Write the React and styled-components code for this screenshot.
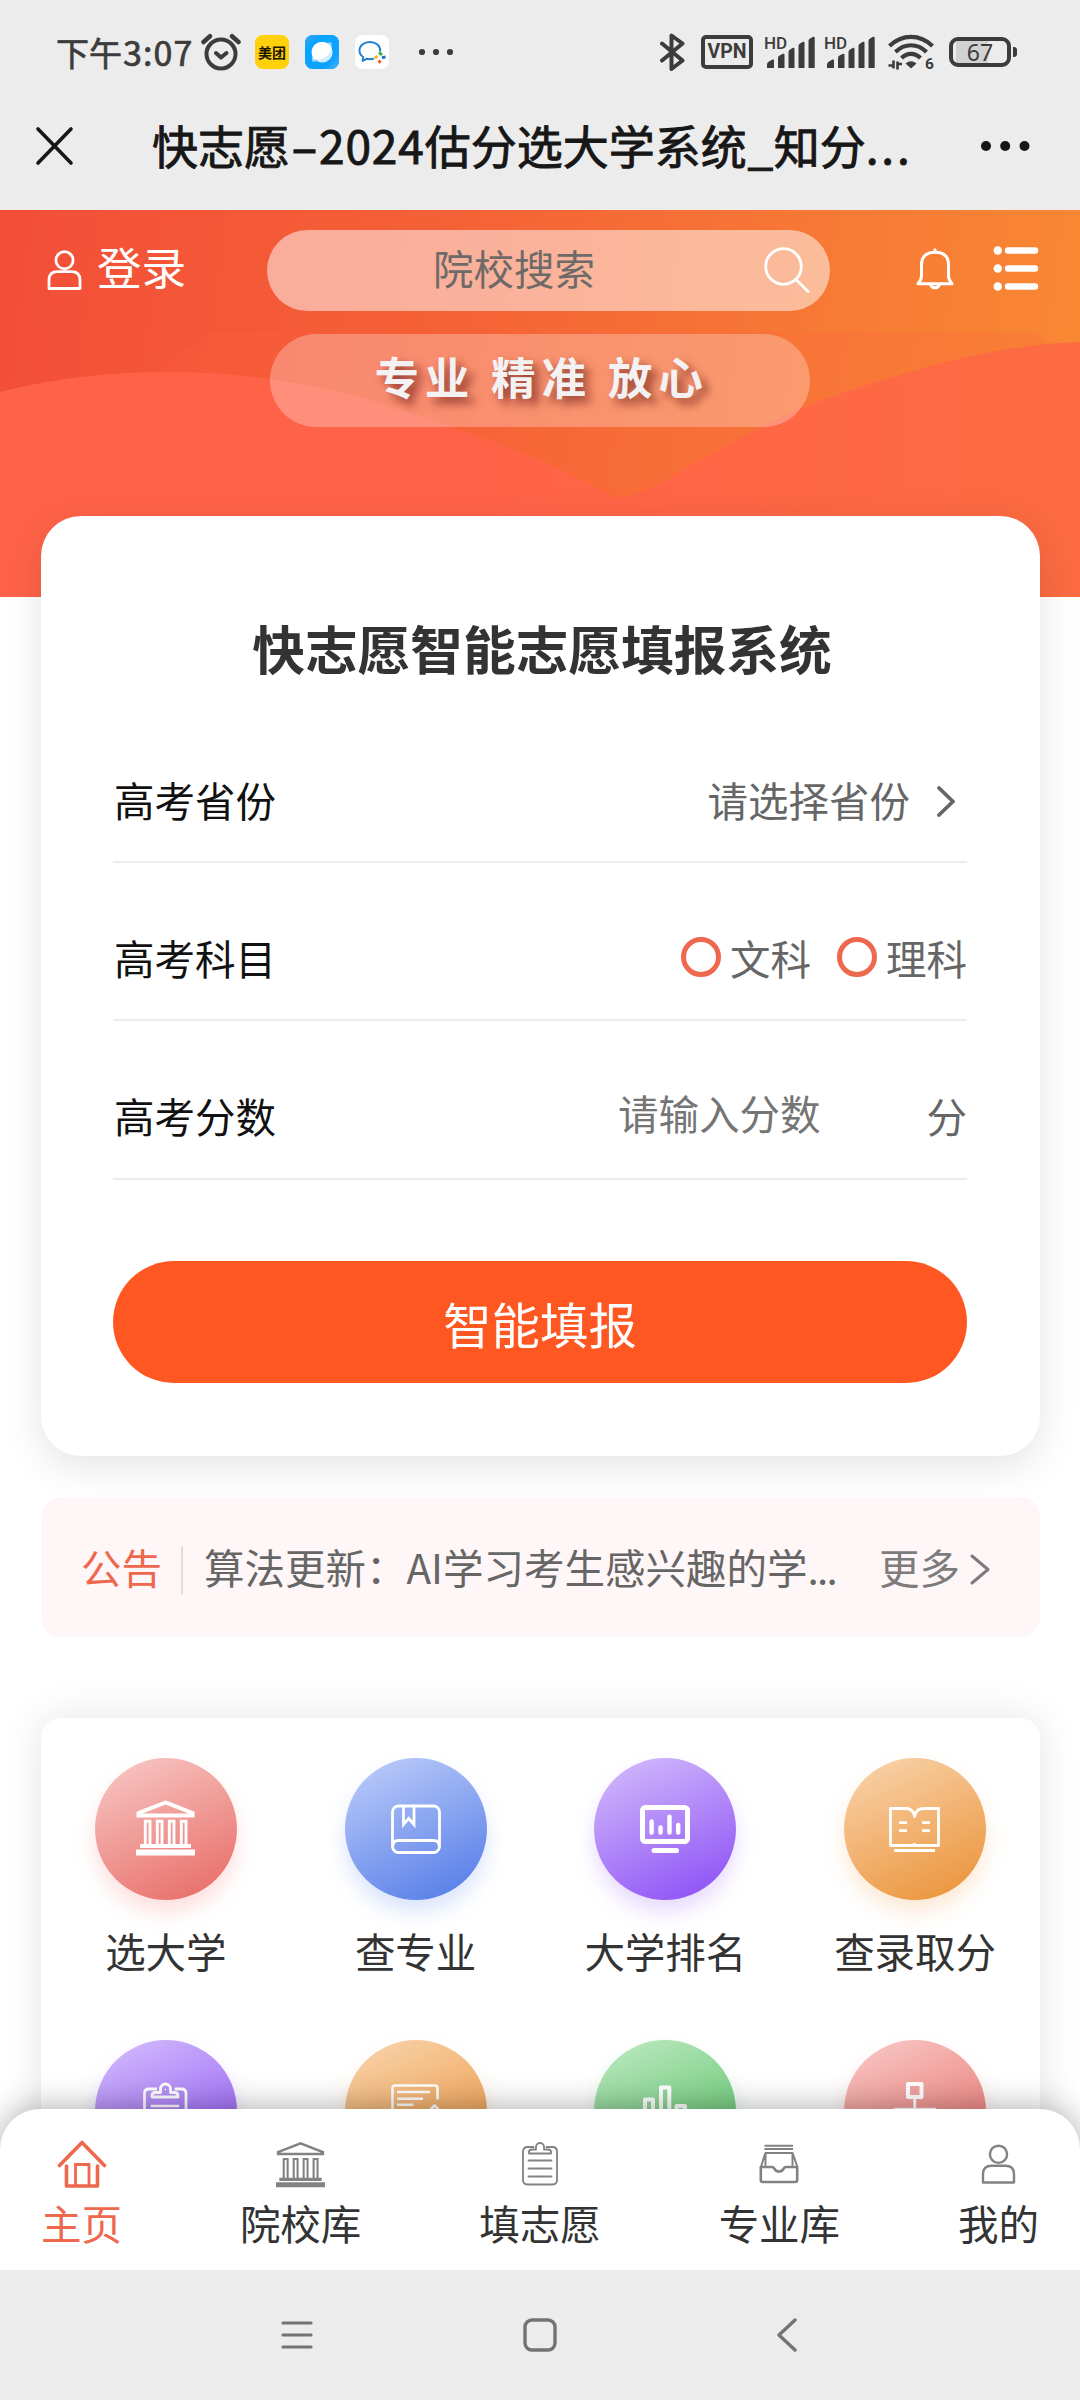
import React from 'react';
import styled, { createGlobalStyle } from 'styled-components';

const GlobalStyle = createGlobalStyle`
  *, *::before, *::after { box-sizing: border-box; }
  body {
    margin: 0;
    background: #ececec;
    font-family: "Noto Sans CJK SC", "Noto Sans", sans-serif;
    -webkit-font-smoothing: antialiased;
  }
  svg { display: block; flex: none; }
`;

const Screen = styled.div`
  width: 1080px;
  height: 2400px;
  display: flex;
  flex-direction: column;
  overflow: hidden;
  background: #ececec;
  color: #333;
  font-size: 40.5px;
  white-space: nowrap;
`;

/* ---------- status bar ---------- */

const StatusBar = styled.header`
  flex: none;
  height: 104px;
  padding: 0 63px 0 56px;
  display: flex;
  align-items: center;
  color: #3c3c3c;
`;

const Clock = styled.div`
  width: 145px;
  font-size: 33px;
  line-height: 40px;
  padding-bottom: 1px;
  -webkit-text-stroke: 0.7px #3c3c3c;
`;

const ClockDigits = styled.span`
  margin-left: 1px;
  font-size: 34px;
  letter-spacing: 1.1px;
`;

const AppBadge = styled.div`
  width: 34px;
  height: 34px;
  margin-left: ${(p) => p.$gap}px;
  border-radius: 8px;
  background: ${(p) => p.$bg};
  display: flex;
  align-items: center;
  justify-content: center;
  overflow: hidden;
  font-size: 14px;
  line-height: 34px;
  font-weight: 700;
  color: #1c1500;
`;

const Overflowed = styled.div`
  margin-left: 29px;
`;

const StatusRight = styled.div`
  margin-left: auto;
  display: flex;
  align-items: center;
`;

const VpnBox = styled.div`
  width: 52px;
  height: 34px;
  margin: 0 12px 0 16px;
  border: 4px solid #3c3c3c;
  border-radius: 5px;
  font: 700 19.5px/26px Roboto, sans-serif;
  text-align: center;
`;

const Signal = styled.div`
  width: 50px;
  height: 34px;
  margin-right: ${(p) => p.$gap}px;
  position: relative;
`;

const HdTag = styled.span`
  position: absolute;
  left: -1px;
  top: 0;
  font: 500 17px/17px Roboto, sans-serif;
`;

const Battery = styled.div`
  width: 62px;
  height: 30px;
  margin-left: 15px;
  border: 4px solid #3c3c3c;
  border-radius: 9px;
  display: flex;
  align-items: center;
  justify-content: center;
  background: linear-gradient(90deg, transparent 3px, #d2d2d2 3px, #d2d2d2 35px, transparent 35px);
  font: 400 23px/22px "Noto Sans", sans-serif;
`;

const BatteryNub = styled.div`
  width: 4px;
  height: 10px;
  margin-left: 2px;
  border-radius: 0 3px 3px 0;
  background: #3c3c3c;
`;

/* ---------- browser title bar ---------- */

const TitleBar = styled.div`
  flex: none;
  height: 106px;
  padding: 0 50px 22px 35px;
  display: flex;
  align-items: center;
  color: #171717;
`;

const PageTitle = styled.h1`
  margin: 0 0 4px 78px;
  width: 770px;
  font-size: 46px;
  line-height: 60px;
  font-weight: 400;
  display: flex;
  -webkit-text-stroke: 0.9px #171717;
`;

const Hyphen = styled.span`
  width: 29px;
  text-align: center;
  display: inline-block;
  transform: scaleX(1.75);
`;

const Underscore = styled.span`
  width: 27px;
  text-align: center;
`;

const Digits = styled.span`
  letter-spacing: 0.9px;
`;

const Ellipsis = styled.span`
  letter-spacing: 2.8px;
`;

const TitleMore = styled.div`
  margin-left: auto;
`;

/* ---------- page ---------- */

const Page = styled.main`
  flex: none;
  height: 2060px;
  position: relative;
  overflow: hidden;
  background: #fff;
`;

const Hero = styled.section`
  height: 387px;
  padding-top: 20px;
  position: relative;
  background: linear-gradient(97deg, #f34e38 0%, #f56236 42%, #f77a35 75%, #f98933 100%);
`;

const HeroWaves = styled.svg`
  position: absolute;
  left: 0;
  top: 0;
`;

const TopBar = styled.div`
  position: relative;
  height: 81px;
  padding: 0 41px 0 47px;
  display: flex;
  align-items: center;
`;

const Login = styled.div`
  width: 220px;
  padding-bottom: 2px;
  display: flex;
  align-items: center;
  gap: 15px;
  color: #fff;
  font-size: 44.6px;
  line-height: 60px;
`;

const LoginText = styled.span`
  margin-top: -8px;
`;

const SearchBox = styled.div`
  width: 563px;
  height: 81px;
  padding: 0 20px 0 166px;
  border-radius: 41px;
  background: rgba(255, 255, 255, 0.5);
  display: flex;
  align-items: center;
  justify-content: space-between;
  color: #6e6a68;
`;

const SearchHint = styled.span`
  margin-top: -6px;
`;

const SearchGlyph = styled.span`
  margin-top: -2px;
  color: #fff;
`;

const TopActions = styled.div`
  margin-left: auto;
  padding-bottom: 3px;
  display: flex;
  align-items: center;
  gap: 39px;
  color: #fff;
`;

const Slogan = styled.div`
  position: relative;
  width: 540px;
  height: 93px;
  margin: 23px auto 0;
  padding-left: 3px;
  border-radius: 47px;
  background: rgba(255, 255, 255, 0.28);
  color: #f3f1f1;
  font-size: 44.6px;
  line-height: 83px;
  font-weight: 700;
  letter-spacing: 5.8px;
  text-align: center;
  text-shadow: 6px 6px 10px rgba(80, 5, 5, 0.62);
`;

const Card = styled.section`
  width: 999px;
  margin: ${(p) => p.$top}px 0 0 41px;
  background: #fff;
  border-radius: ${(p) => p.$radius}px;
  box-shadow: 0 ${(p) => p.$drop}px 40px rgba(0, 0, 0, 0.11);
`;

const FormCard = styled(Card)`
  position: relative;
  height: 940px;
  padding: 72px 73px 0 72px;
`;

const FormTitle = styled.h2`
  margin: 0 -4px 0 0;
  height: 116px;
  font-size: 52.7px;
  line-height: 118px;
  font-weight: 700;
  text-align: center;
`;

const FormRow = styled.div`
  height: 158.500px;
  padding-top: ${(p) => p.$top || 33}px;
  border-bottom: 2px solid #ececec;
  display: flex;
  align-items: center;
  color: #666;
`;

const FieldLabel = styled.label`
  flex: 1;
  padding-left: 1px;
  color: #111;
`;

const PickerValue = styled.span`
  margin-right: 27px;
`;

const PickerArrow = styled.span`
  margin: 4px 12px 0 0;
`;

const RadioOption = styled.span`
  display: flex;
  align-items: center;
  margin-left: ${(p) => p.$gap || 0}px;
`;

const RadioDot = styled.span`
  width: 40px;
  height: 40px;
  margin-right: 9px;
  border: 5px solid #ee684e;
  border-radius: 50%;
`;

const ScoreHint = styled.span`
  margin: 0 106px 7px 0;
  color: #757575;
`;

const SubmitButton = styled.button`
  display: block;
  width: 100%;
  height: 122px;
  margin-top: 81px;
  padding: 2px 0 0;
  border: 0;
  border-radius: 61px;
  background: #ff5722;
  color: #fff;
  font-family: inherit;
  font-size: 48.4px;
`;

const Notice = styled.section`
  width: 999px;
  height: 140px;
  margin: 41px 0 0 41px;
  padding: 0 50px 1px 40px;
  border-radius: 20px;
  background: #fff6f7;
  position: relative;
  display: flex;
  align-items: center;
  color: #666;
`;

const NoticeTag = styled.span`
  color: #ee684e;
`;

const NoticeDivider = styled.span`
  width: 2px;
  height: 48px;
  margin: 6px 21px 0 19px;
  background: #e3dcdc;
`;

const NoticeText = styled.span`
  flex: 1;
`;

const NoticeEllipsis = styled.span`
  letter-spacing: -1.8px;
`;

const NoticeMore = styled.span`
  display: flex;
  align-items: center;
  gap: 10px;
  color: #7c7c7c;
`;

const NoticeArrow = styled.span`
  margin-top: 5px;
`;

const MenuCard = styled(Card)`
  height: 600px;
  padding-top: 40px;
  display: grid;
  grid-template-columns: repeat(4, 1fr);
  grid-auto-rows: 221px;
  row-gap: 61px;
`;

const MenuItem = styled.div`
  display: flex;
  flex-direction: column;
  align-items: center;
  gap: 20.500px;
  line-height: 60px;
`;

const MenuDisc = styled.div`
  width: 142px;
  height: 142px;
  border-radius: 50%;
  background: linear-gradient(155deg, ${(p) => p.$from} 8%, ${(p) => p.$to} 95%);
  box-shadow: 0 12px 20px ${(p) => p.$glow};
`;

const TabBar = styled.nav`
  position: absolute;
  left: 0;
  right: 0;
  bottom: 0;
  height: 161px;
  padding: 31px 41px 0;
  border-radius: 40px 40px 0 0;
  background: #fff;
  box-shadow: 0 0 34px rgba(0, 0, 0, 0.34);
  display: flex;
  justify-content: space-between;
`;

const Tab = styled.div`
  display: flex;
  flex-direction: column;
  align-items: center;
  color: ${(p) => (p.$active ? '#ee684e' : '#333')};
  line-height: 50px;
`;

const TabIcon = styled.div`
  height: 48px;
  margin-bottom: 10px;
  display: flex;
  align-items: center;
  color: ${(p) => (p.$active ? '#ee684e' : '#828282')};
`;

/* ---------- system navigation ---------- */

const SystemNav = styled.footer`
  flex: 1;
  background: #ececec;
  display: flex;
  align-items: center;
  padding: 0 283px 0 281px;
  color: #737373;
`;

const NavHome = styled.span`
  margin-left: 210px;
  margin-right: auto;
`;

/* ---------- icons ---------- */

const Svg = ({ w, h, box, sw = 3, children }) => (
  <svg
    width={w}
    height={h}
    viewBox={box || `0 0 ${w} ${h}`}
    fill="none"
    stroke="currentColor"
    strokeWidth={sw}
    strokeLinecap="round"
    strokeLinejoin="round"
  >
    {children}
  </svg>
);

const AlarmIcon = () => (
  <Svg w={40} h={38} sw={4}>
    <circle cx="20" cy="21" r="14.5" />
    <path d="M2.500 9L9 3.200M37.500 9L31 3.200" strokeWidth="4.500" />
    <path d="M15 20l5 4.500 5.500-4.500" />
  </Svg>
);

const StatusDots = () => (
  <Svg w={36} h={10} sw={0}>
    <g fill="currentColor">
      <circle cx="4" cy="5" r="3.100" />
      <circle cx="18" cy="5" r="3.100" />
      <circle cx="32" cy="5" r="3.100" />
    </g>
  </Svg>
);

const BrowserMark = () => (
  <svg width="34" height="34" viewBox="0 0 34 34">
    <defs>
      <linearGradient id="bm" x1="0" y1="0" x2="1" y2="1">
        <stop offset="0" stopColor="#3ea2f2" />
        <stop offset="0.25" stopColor="#08a5ff" />
        <stop offset="0.75" stopColor="#0ba2ff" />
        <stop offset="1" stopColor="#4db4f8" />
      </linearGradient>
    </defs>
    <rect width="34" height="34" fill="url(#bm)" />
    <circle cx="17.300" cy="17.300" r="10.300" fill="#d5edff" />
    <path d="M22 7.500h4.500v5zM7 22v4.500h5z" fill="#9bd8ff" />
    <path d="M26.800 13.500C25 20 17 26 9 24.500 5 19 6 11 12.500 8c6-2.500 12.500.500 14.300 5.500z" fill="#fff" />
  </svg>
);

const WorkChatMark = () => (
  <svg width="34" height="34" viewBox="0 0 34 34" fill="none">
    <path
      d="M25.300 16.500C25.600 10.500 20.800 7 14.800 7 8.800 7 4.500 10.800 4.500 15.500c0 2.800 1.400 5 3.700 6.500l-.6 3.800 4-2c2.500.6 4.900.6 7.300 0"
      stroke="#1f80d0"
      strokeWidth="2"
      strokeLinejoin="round"
    />
    <path d="M24 17.300l3 2.700" stroke="#3cb034" strokeWidth="3" />
    <path d="M27 22.700l3.500-.8" stroke="#1f6fd0" strokeWidth="3" />
    <path d="M23.700 25.300l1.800 2.500" stroke="#ee5a2b" strokeWidth="3" />
    <path d="M19.800 23.300l2.500-2.300" stroke="#f6b62c" strokeWidth="3" />
  </svg>
);

const BluetoothIcon = () => (
  <Svg w={25} h={38} sw={4}>
    <path d="M2 10.500l20.500 17L11.500 36V2.500l11 8L2 27.500" />
  </Svg>
);

const SignalBars = () => (
  <svg width="50" height="34" viewBox="0 0 50 34" fill="currentColor">
    <path d="M2 33v-3.500q0-2 2-3l3.500-2q1.500-.5 1.500 1V33zM13 33V23q0-2 2-2.800l3-1.400q1.500-.3 1.500 1V33zM23.500 33V17q0-2 2-2.800l2.500-1.400q1.500-.3 1.500 1V33zM33.500 33V11q0-2 2-2.800l2.500-1.400q1.500-.3 1.500 1V33zM43.500 33V6q0-2 2-2.800l2.500-1.400q1.700-.5 1.700 1V33z" />
  </svg>
);

const WifiIcon = () => (
  <svg width="46" height="44" viewBox="0 -4 46 44" fill="none" stroke="currentColor" strokeWidth="4.200">
    <path d="M1.500 12C14-.2 32-.2 44.500 12" />
    <path d="M7.500 18c9-9 22-9 31 0" />
    <path d="M13.500 24c5.500-5.500 13.500-5.500 19 0" />
    <path d="M17.500 29.500q5.500-4.500 11 0L23 34.500z" fill="currentColor" stroke="none" />
    <path d="M5.500 26.500v8M.5 31.500h5M9.500 35.500v-8M14 30H9.500" strokeWidth="2.600" />
    <text x="37" y="34.500" fontFamily="Roboto, sans-serif" fontWeight="700" fontSize="15.500" fill="currentColor" stroke="none">6</text>
  </svg>
);

const CloseIcon = () => (
  <Svg w={39} h={40} sw={3.6}>
    <path d="M3 3l33 34M36 3L3 37" />
  </Svg>
);

const MoreIcon = () => (
  <Svg w={50} h={12} sw={0}>
    <g fill="currentColor">
      <circle cx="6" cy="6" r="5" />
      <circle cx="25.200" cy="6" r="5" />
      <circle cx="44.500" cy="6" r="5" />
    </g>
  </Svg>
);

const UserIcon = ({ sw = 2.8 }) => (
  <Svg w={35} h={40} sw={sw}>
    <circle cx="17.500" cy="10.300" r="8.600" />
    <path d="M2 38.500V30c0-6 3-8.300 8.500-8.300h14c5.500 0 8.500 2.300 8.500 8.300v8.500z" />
  </Svg>
);

const SearchIcon = () => (
  <Svg w={46} h={46} sw={2.8}>
    <circle cx="19.500" cy="19.500" r="17.800" />
    <path d="M32 32.500l12 12" strokeLinecap="square" />
  </Svg>
);

const BellIcon = () => (
  <Svg w={38} h={42} sw={3}>
    <path d="M5.500 28V17c0-8.500 5-12.800 13.500-12.800S32.500 8.500 32.500 17v11c0 3 1 5 3.500 7.800H2c2.500-2.800 3.500-4.800 3.500-7.800z" />
    <path d="M19 1.800v2M15 37.500c1.500 3 6.500 3 8 0" />
  </Svg>
);

const ListIcon = () => (
  <Svg w={46} h={46} sw={6.4}>
    <path d="M15 4.500h27M15 22.500h27M15 40.500h27" />
    <g fill="currentColor" stroke="none">
      <circle cx="4.800" cy="4.500" r="4.200" />
      <circle cx="4.800" cy="22.500" r="4.200" />
      <circle cx="4.800" cy="40.500" r="4.200" />
    </g>
  </Svg>
);

const Chevron = ({ w, h, sw, flip }) => (
  <Svg w={w} h={h} sw={sw}>
    <path d={flip ? `M${w - 2} 2L2 ${h / 2}L${w - 2} ${h - 2}` : `M2 2L${w - 2} ${h / 2}L2 ${h - 2}`} />
  </Svg>
);

const BankShape = ({ thin }) => (
  <g strokeLinejoin="miter">
    <path d="M70.500 44.500L43.500 55v2.500h54V55z" strokeWidth={thin ? 3 : 4} />
    <path
      d="M50.300 86V63.300h4.700V86M62.300 86V63.300h4.700V86M74.300 86V63.300H79V86M86.300 86V63.300H91V86"
      strokeWidth={thin ? 2.5 : 2.9}
    />
    <path d="M45 86h51v4H45zM41 91.500h59v6H41z" fill="currentColor" stroke="none" />
  </g>
);

const Disc = ({ children }) => (
  <svg
    width="142"
    height="142"
    viewBox="0 0 142 142"
    fill="none"
    stroke="currentColor"
    strokeWidth="2.800"
    strokeLinejoin="round"
    color="#fff"
  >
    {children}
  </svg>
);

const BookShape = () => (
  <g>
    <rect x="47.500" y="48" width="47" height="46.500" rx="6" />
    <path d="M58.500 48v18.500l5.200-6 5.300 6V48" strokeLinejoin="miter" />
    <path d="M48 88c0-4 2-5.500 5-5.500h36c3 0 5 1.500 5 5.500" />
  </g>
);

const MonitorShape = () => (
  <g strokeLinecap="round">
    <rect x="48.500" y="49.500" width="45" height="34" rx="3" strokeWidth="5" />
    <path d="M57.600 63.500v11M66.500 69.500v5M75.500 58.800v15.700M84.200 67v7.500" strokeWidth="4.400" />
    <path d="M60 92.600h22.500" strokeWidth="5" />
  </g>
);

const OpenBookShape = () => (
  <g>
    <path d="M70.600 58.500c-1-5.500-4-8-8.600-8H46.500v37h48v-37H79.500c-5 0-8 2.500-8.900 8z" />
    <path d="M55 64.700h8M55 72.700h8M78 64.700h8M78 72.700h8M50 92.500h41M70.600 85v3" />
  </g>
);

const ClipboardShape = () => (
  <g>
    <path d="M62 49h-8c-3 0-4.500 1.500-4.500 4.500v40h41.500v-40c0-3-1.500-4.500-4.500-4.500h-7" />
    <path d="M57 57v-1.500c0-2 1.500-3 4-3h4.500V49a5 5 0 0 1 10 0v3.500H79c2.500 0 4 1 4 3V57z" />
    <path d="M55.700 66h28.500M55.700 75h28.500" strokeWidth="2.400" />
    <circle cx="70.300" cy="49.500" r="0.800" fill="currentColor" stroke="none" />
  </g>
);

const NoteShape = () => (
  <g strokeWidth="2.600">
    <path d="M92.500 59.500V48c0-1.700-.8-2.500-2.500-2.500H50c-1.700 0-2.500.8-2.500 2.500v44h30" />
    <path d="M52 52h33M52 58.700h26M52 64.700h16.500M84 71l5.500-5.500L95 71 80 88" />
  </g>
);

const BarsShape = () => (
  <g strokeWidth="4">
    <path d="M51 96V59.500h8V96M67 96V47.500h8.300V96M82.500 96V66H91v30" />
  </g>
);

const OrgShape = () => (
  <g strokeWidth="4">
    <rect x="64" y="44" width="13.500" height="13" />
    <path d="M70.700 57v20M51 80V69.300h40V80" strokeWidth="3" />
  </g>
);

const HomeIcon = () => (
  <Svg w={50} h={48} sw={3.6}>
    <path d="M2.500 25.500L25 2.500l22.500 23" />
    <path d="M9.500 26v20h31V26" />
    <path d="M18.500 45V24.500h13.500V45" strokeWidth="2.800" strokeLinejoin="miter" />
  </Svg>
);

const TabClipboardIcon = () => (
  <Svg w={36} h={44} sw={1.8}>
    <path d="M11.500 5H5.500C2.500 5 1 6.500 1 9.500V38c0 3 1.500 4.500 4.500 4.500h25c3 0 4.500-1.500 4.500-4.500V9.500C35 6.500 33.500 5 30.500 5h-6" />
    <path d="M7 11.500V10c0-1.700 1-2.500 3-2.500h4V5a4 4 0 0 1 8 0v2.500h4c2 0 3 .8 3 2.500v1.500z" />
    <path d="M6.500 18.500h23M6.500 26.500h23M6.500 34.500h23" />
  </Svg>
);

const InboxIcon = () => (
  <Svg w={40} h={40} sw={2.6}>
    <path d="M1.800 23v13q0 2 2 2h32.400q2 0 2-2V23H26.500c-2 0-1.500 4.500-6.500 4.500s-4.500-4.500-6.500-4.500z" />
    <path d="M5.500 1.800h28.500M5.500 5h28.500" strokeWidth="2" strokeLinecap="butt" />
    <path d="M6.500 21V9h27v12M6 10L2 23M34 10l4 12" strokeWidth="2" />
  </Svg>
);

const MenuLines = () => (
  <Svg w={32} h={28} sw={3.2}>
    <path d="M2 2h28M2 14h28M2 26h28" />
  </Svg>
);

const HomeSquare = () => (
  <Svg w={34} h={34} sw={3.4}>
    <rect x="2" y="2" width="30" height="30" rx="7" />
  </Svg>
);

/* ---------- data ---------- */

const red = ['#f7c3c0', '#e86c67', 'rgba(245, 120, 115, 0.24)'];
const purple = ['#cfb6fb', '#8d50f5', 'rgba(150, 90, 250, 0.22)'];
const orange = ['#f8d0a6', '#eb9339', 'rgba(240, 155, 70, 0.22)'];
const blue = ['#b8c8f8', '#557de8', 'rgba(90, 130, 240, 0.22)'];
const green = ['#b6e7bc', '#55bf61', 'rgba(90, 200, 110, 0.22)'];

const menu = [
  { label: '选大学', colors: red, shape: <BankShape /> },
  { label: '查专业', colors: blue, shape: <BookShape /> },
  { label: '大学排名', colors: purple, shape: <MonitorShape /> },
  { label: '查录取分', colors: orange, shape: <OpenBookShape /> },
  { colors: purple, shape: <ClipboardShape /> },
  { colors: orange, shape: <NoteShape /> },
  { colors: green, shape: <BarsShape /> },
  { colors: red, shape: <OrgShape /> },
];

const tabs = [
  { label: '主页', icon: <HomeIcon />, active: true },
  { label: '院校库', icon: <Svg w={49} h={47} box="41 42 59 56"><BankShape thin /></Svg> },
  { label: '填志愿', icon: <TabClipboardIcon /> },
  { label: '专业库', icon: <InboxIcon /> },
  { label: '我的', icon: <UserIcon sw={2.4} /> },
];

export default function App() {
  return (
    <>
      <GlobalStyle />
      <Screen>
        <StatusBar>
          <Clock>下午<ClockDigits>3:07</ClockDigits></Clock>
          <AlarmIcon />
          <AppBadge $gap={14} $bg="#ffd10a">美团</AppBadge>
          <AppBadge $gap={16} $bg="#0aa3ff"><BrowserMark /></AppBadge>
          <AppBadge $gap={16} $bg="#fff"><WorkChatMark /></AppBadge>
          <Overflowed><StatusDots /></Overflowed>
          <StatusRight>
            <BluetoothIcon />
            <VpnBox>VPN</VpnBox>
            <Signal $gap={10}><HdTag>HD</HdTag><SignalBars /></Signal>
            <Signal $gap={13}><HdTag>HD</HdTag><SignalBars /></Signal>
            <WifiIcon />
            <Battery>67</Battery>
            <BatteryNub />
          </StatusRight>
        </StatusBar>

        <TitleBar>
          <CloseIcon />
          <PageTitle>
            快志愿<Hyphen>-</Hyphen><Digits>2024</Digits>估分选大学系统<Underscore>_</Underscore>知分<Ellipsis>...</Ellipsis>
          </PageTitle>
          <TitleMore><MoreIcon /></TitleMore>
        </TitleBar>

        <Page>
          <Hero>
            <HeroWaves width="1080" height="387" viewBox="0 0 1080 387">
              <defs>
                <linearGradient id="hill" x1="0" x2="1">
                  <stop offset="0" stopColor="#ff6347" />
                  <stop offset="0.45" stopColor="#ff6347" />
                  <stop offset="1" stopColor="#fc6b41" />
                </linearGradient>
              </defs>
              <path d="M155 164L198 130Q208 122 220 122H1028Q1036 122 1042 127L1060 140V387H155z" fill="#ff6340" opacity="0.2" />
              <path
                d="M0 182C55 168 110 162 165 162C215 162 255 166 296 173C330 179 365 188 396 198C450 215 500 234 540 250C568 262 595 276 616 287Q624 289 632 286C650 278 664 271 678 263L760 217C800 197 845 181 884 170C940 152 1010 134 1080 132V387H0z"
                fill="url(#hill)"
              />
            </HeroWaves>
            <TopBar>
              <Login><UserIcon /><LoginText>登录</LoginText></Login>
              <SearchBox>
                <SearchHint>院校搜索</SearchHint>
                <SearchGlyph><SearchIcon /></SearchGlyph>
              </SearchBox>
              <TopActions>
                <BellIcon />
                <ListIcon />
              </TopActions>
            </TopBar>
            <Slogan>专业 精准 放心</Slogan>
          </Hero>

          <FormCard $top={-81} $radius={40} $drop={10}>
            <FormTitle>快志愿智能志愿填报系统</FormTitle>
            <FormRow $top={35}>
              <FieldLabel>高考省份</FieldLabel>
              <PickerValue>请选择省份</PickerValue>
              <PickerArrow><Chevron w={18} h={31} sw={3.8} /></PickerArrow>
            </FormRow>
            <FormRow>
              <FieldLabel>高考科目</FieldLabel>
              <RadioOption><RadioDot />文科</RadioOption>
              <RadioOption $gap={26}><RadioDot />理科</RadioOption>
            </FormRow>
            <FormRow>
              <FieldLabel>高考分数</FieldLabel>
              <ScoreHint>请输入分数</ScoreHint>
              <span>分</span>
            </FormRow>
            <SubmitButton>智能填报</SubmitButton>
          </FormCard>

          <Notice>
            <NoticeTag>公告</NoticeTag>
            <NoticeDivider />
            <NoticeText>算法更新：AI学习考生感兴趣的学<NoticeEllipsis>...</NoticeEllipsis></NoticeText>
            <NoticeMore>更多<NoticeArrow><Chevron w={20} h={31} sw={3} /></NoticeArrow></NoticeMore>
          </Notice>

          <MenuCard $top={81} $radius={20} $drop={0}>
            {menu.map((m, i) => (
              <MenuItem key={i}>
                <MenuDisc $from={m.colors[0]} $to={m.colors[1]} $glow={m.colors[2]}>
                  <Disc>{m.shape}</Disc>
                </MenuDisc>
                {m.label}
              </MenuItem>
            ))}
          </MenuCard>

          <TabBar>
            {tabs.map((t) => (
              <Tab key={t.label} $active={t.active}>
                <TabIcon $active={t.active}>{t.icon}</TabIcon>
                {t.label}
              </Tab>
            ))}
          </TabBar>
        </Page>

        <SystemNav>
          <MenuLines />
          <NavHome><HomeSquare /></NavHome>
          <Chevron w={20} h={34} sw={3.4} flip />
        </SystemNav>
      </Screen>
    </>
  );
}
